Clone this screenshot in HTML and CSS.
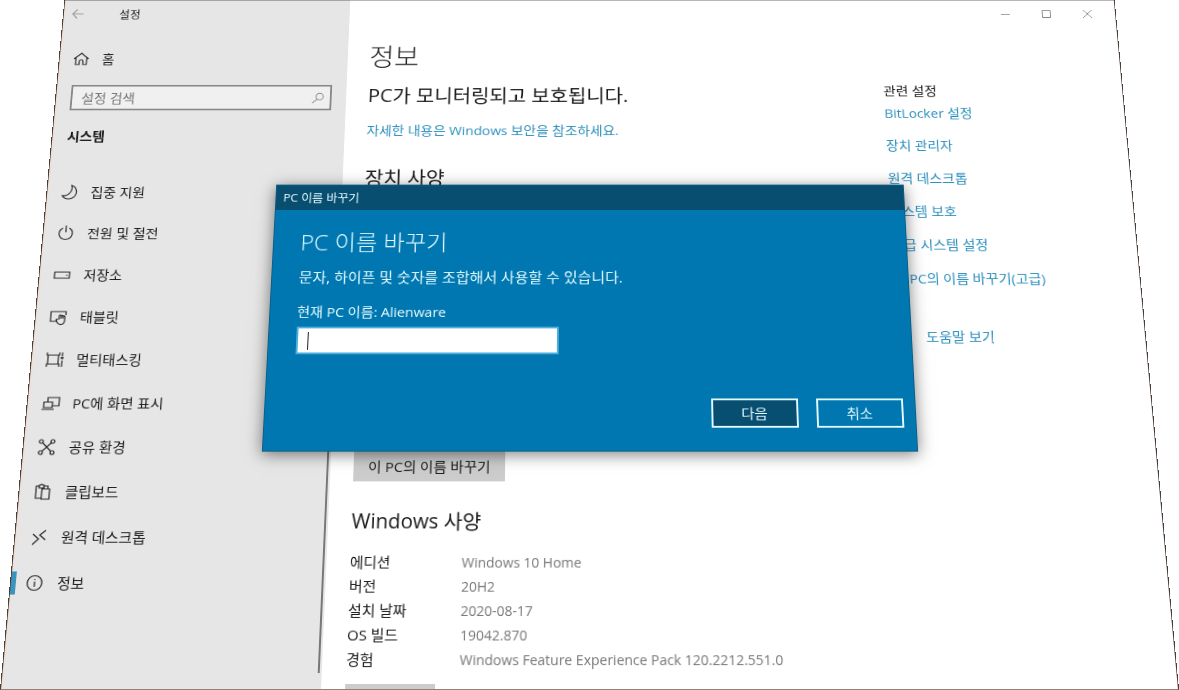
FILE: index.html
```
<!DOCTYPE html>
<html lang="ko">
<head>
<meta charset="utf-8">
<meta name="viewport" content="width=device-width, initial-scale=1.0">
<title>설정</title>
<link rel="stylesheet" href="styles.css">
</head>
<body>
<div class="window">

  <div class="sidebar">
    <div class="titlebar">
      <button class="back" aria-label="뒤로"><svg width="14" height="14" viewBox="0 0 14 14"><path d="M13 7H1M6 1.5L1 7l5 5.5"/></svg></button>
      <span>설정</span>
    </div>
    <a class="nav-item home" href="#">
      <svg viewBox="0 0 20 20"><path d="M2 10L10 3l8 7M4 8.500V17h4v-4q0-2 2-2t2 2v4h4V8.500"/></svg>홈
    </a>
    <div class="search">
      <input type="text" placeholder="설정 검색" aria-label="설정 검색">
      <svg viewBox="0 0 16 16"><circle cx="10" cy="6" r="4.5"/><path d="M7 9.5L1 15"/></svg>
    </div>
    <h2 class="group">시스템</h2>
    <nav>
      <a class="nav-item" href="#"><svg viewBox="0 0 20 20"><path d="M12 2c4 1.500 6 5 5.500 9-.5 4-4 7-8 7-3 0-5.500-1.500-7-4 3 .5 6-.5 8-3s2.500-6 1.500-9z"/></svg>집중 지원</a>
      <a class="nav-item" href="#"><svg viewBox="0 0 20 20"><path d="M10 1v8M6.500 4a7.200 7.200 0 1 0 7 0"/></svg>전원 및 절전</a>
      <a class="nav-item" href="#"><svg viewBox="0 0 20 20"><path d="M2 7h16v7H2zM14.500 10.500h1.500"/></svg>저장소</a>
      <a class="nav-item" href="#"><svg viewBox="0 0 20 20"><path d="M9 15H2V4h16v4M11 13V8.500q1-1.500 2 0V12V9q1-1 2 0v3V9.500q1-1 2 0V15q-.5 3.500-3.500 3.500-3 .3-4.500-2.500l-1-2.500q0-1.500 2-.5"/></svg>태블릿</a>
      <a class="nav-item" href="#"><svg viewBox="0 0 20 20"><path d="M3 5h11v10H3zM2 2v3h13V2M2 18v-3h13v3M18 2v4M18 11v7"/><circle cx="18" cy="8" r="1"/></svg>멀티태스킹</a>
      <a class="nav-item" href="#"><svg viewBox="0 0 20 20"><path d="M7 9V4h12v9h-7M3 9h9v6H3zM1 17h13"/></svg>PC에 화면 표시</a>
      <a class="nav-item" href="#"><svg viewBox="0 0 20 20"><circle cx="4" cy="4" r="2"/><circle cx="16" cy="4" r="2"/><circle cx="4" cy="16" r="2"/><circle cx="16" cy="16" r="2"/><path d="M5.500 5.500l9 9M14.500 5.500l-9 9"/></svg>공유 환경</a>
      <a class="nav-item" href="#"><svg viewBox="0 0 20 20"><path d="M9 17H3V4h3M11 4h4v3M6 3h1.500q1-2 2 0H11v3H6zM9 7h8v11H9z"/></svg>클립보드</a>
      <a class="nav-item" href="#"><svg viewBox="0 0 20 20"><path d="M4 7l6 5-6 6M17 3l-6 5 6 5"/></svg>원격 데스크톱</a>
      <a class="nav-item active" href="#"><svg viewBox="0 0 20 20"><circle cx="10" cy="10" r="7.500"/><path d="M10 8.500V14M10 6v1"/></svg>정보</a>
    </nav>
  </div>

  <div class="page">
    <div class="controls">
      <button aria-label="최소화"><svg width="10" height="10" viewBox="0 0 10 10"><path d="M0 5.500h10"/></svg></button>
      <button aria-label="최대화"><svg width="10" height="10" viewBox="0 0 10 10"><path d="M.5.5h9v9h-9z"/></svg></button>
      <button aria-label="닫기"><svg width="10" height="10" viewBox="0 0 10 10"><path d="M0 0l10 10M10 0L0 10"/></svg></button>
    </div>
    <div class="columns">
      <main>
        <h1>정보</h1>
        <h2>PC가 모니터링되고 보호됩니다.</h2>
        <a class="security" href="#">자세한 내용은 Windows 보안을 참조하세요.</a>
        <h2 class="device">장치 사양</h2>
        <button class="grey">이 PC의 이름 바꾸기</button>
        <h2 class="edition">Windows 사양</h2>
        <table>
          <tr><th>에디션</th><td>Windows 10 Home</td></tr>
          <tr><th>버전</th><td>20H2</td></tr>
          <tr><th>설치 날짜</th><td>2020-08-17</td></tr>
          <tr><th>OS 빌드</th><td>19042.870</td></tr>
          <tr><th>경험</th><td>Windows Feature Experience Pack 120.2212.551.0</td></tr>
        </table>
        <button class="grey copy" aria-label="복사"></button>
      </main>
      <aside>
        <h3>관련 설정</h3>
        <a href="#">BitLocker 설정</a>
        <a href="#">장치 관리자</a>
        <a href="#">원격 데스크톱</a>
        <a href="#">시스템 보호</a>
        <a href="#">고급 시스템 설정</a>
        <a href="#">이 PC의 이름 바꾸기(고급)</a>
        <a class="help" href="#">도움말 보기</a>
      </aside>
    </div>
  </div>

  <form class="dialog" role="dialog" aria-labelledby="dialog-title">
    <div class="dialog-bar">PC 이름 바꾸기</div>
    <div class="dialog-body">
      <h2 id="dialog-title">PC 이름 바꾸기</h2>
      <p>문자, 하이픈 및 숫자를 조합해서 사용할 수 있습니다.</p>
      <label for="pc-name">현재 PC 이름: Alienware</label>
      <div class="name-box">
        <span class="caret"></span>
        <input id="pc-name" type="text">
      </div>
    </div>
    <div class="dialog-buttons">
      <button class="next" type="button">다음</button>
      <button type="button">취소</button>
    </div>
  </form>

</div>
</body>
</html>
```
FILE: styles.css
```
* {
  box-sizing: border-box;
}

body {
  margin: 0;
  height: 100vh;
  display: flex;
  align-items: flex-end;
  overflow: hidden;
  background: #fff;
  color: #1a1a1a;
  font: 15px/24px "Open Sans", "Noto Sans CJK KR", sans-serif;
}

h1, h2, h3, p {
  margin: 0;
  font-weight: 400;
}

a {
  color: #2b8fbd;
  text-decoration: none;
}

button, input {
  font: inherit;
  color: inherit;
  border: 0;
  padding: 0;
  background: none;
}

svg {
  fill: none;
  stroke: #222;
  stroke-width: 1.2;
}

/* the whole window leans back from its bottom edge */
.window {
  position: relative;
  flex: 1;
  height: 112.4vh;
  flex-shrink: 0;
  display: flex;
  overflow: hidden;
  border: 1px solid #4a3d35;
  border-bottom-color: #96836f;
  transform: perspective(48vh) rotateX(3deg);
  transform-origin: 50% 100%;
}

/* sidebar */
.sidebar {
  position: relative;
  width: 320px;
  flex-shrink: 0;
  background: #e6e6e6;
  border-left: 2px solid #ece1da;
}

.sidebar::after {
  content: "";
  position: absolute;
  right: 2px;
  top: 300px;
  bottom: 16px;
  width: 2px;
  background: #777;
}

.titlebar {
  height: 34px;
  padding-left: 7px;
  display: flex;
  align-items: center;
  gap: 39px;
  font-size: 13px;
}

.back {
  width: 14px;
  height: 14px;
  display: flex;
}

.back svg {
  stroke: #999;
}

.nav-item {
  position: relative;
  display: flex;
  align-items: center;
  gap: 13px;
  height: 48px;
  padding-left: 12px;
  color: #1a1a1a;
}

.nav-item svg {
  width: 20px;
  height: 20px;
}

.home {
  margin-top: 15px;
}

.active::before {
  content: "";
  position: absolute;
  left: -2px;
  top: 12px;
  width: 5px;
  height: 24px;
  background: #3a95bd;
}

.search {
  display: flex;
  align-items: center;
  height: 31px;
  margin: 8px 16px 0 14px;
  padding: 0 6px 0 10px;
  background: #f0f0f0;
  border: 2px solid #888;
}

.search input {
  flex: 1;
  min-width: 0;
}

.search input::placeholder {
  color: #777;
}

.search svg {
  width: 14px;
  height: 14px;
  stroke: #888;
}

.group {
  margin: 19px 0 31px 14px;
  font-size: 15px;
  line-height: 24px;
  font-weight: 700;
}

/* page */
.page {
  flex: 1;
  min-width: 0;
  display: flex;
  flex-direction: column;
  background: #fff;
}

.controls {
  height: 34px;
  flex-shrink: 0;
  display: flex;
  justify-content: flex-end;
  padding-right: 8px;
}

.controls button {
  width: 46px;
  display: flex;
  align-items: center;
  justify-content: center;
}

.controls svg {
  stroke: #888;
  stroke-width: 1;
}

.columns {
  display: flex;
}

main {
  flex: 1;
  min-width: 0;
  padding: 16px 0 0 24px;
}

h1 {
  font-size: 30px;
  line-height: 40px;
  font-weight: 300;
  margin-bottom: 13px;
}

h2 {
  font-size: 22px;
  line-height: 28px;
}

.security {
  display: block;
  margin: 17px 0 30px;
}

.grey {
  display: block;
  height: 32px;
  padding: 0 15px;
  background: #ccc;
}

.device {
  margin-bottom: 297px;
}

.edition {
  margin: 28px 0 17px;
  font-size: 21px;
}

table {
  border-spacing: 0;
  line-height: 25px;
}

th, td {
  padding: 0;
  text-align: left;
  font-weight: 400;
}

th {
  width: 114px;
}

td {
  color: #777;
  font-size: 14px;
}

.copy {
  width: 90px;
  margin-top: 12px;
}

aside {
  width: 264px;
  padding-top: 66px;
  display: flex;
  flex-direction: column;
  align-items: flex-start;
  gap: 15px;
}

aside h3 {
  font-size: 15px;
  margin-bottom: -12px;
}

.help {
  margin: 27px 0 0 32px;
}

/* rename dialog */
.dialog {
  position: absolute;
  top: 225px;
  left: 0;
  right: 0;
  width: 682px;
  margin: 0 auto;
  background: #0077b0;
  border: 1px solid #0a5f8a;
  color: #e4fbff;
  box-shadow: 0 3px 16px rgba(0, 0, 0, .5);
}

.dialog-bar {
  height: 29px;
  padding-left: 8px;
  background: #084e70;
  font-size: 13px;
  line-height: 28px;
}

.dialog-body {
  padding: 21px 29px 0;
}

.dialog h2 {
  font-size: 25px;
  line-height: 32px;
  font-weight: 300;
}

.dialog p {
  margin: 13px 0 15px;
  font-size: 16px;
}

.dialog label {
  display: block;
}

.name-box {
  display: flex;
  align-items: center;
  width: 278px;
  height: 31px;
  margin-top: 5px;
  padding-left: 10px;
  background: #fff;
  border: 2px solid #4fb0dd;
  color: #111;
}

.name-box input {
  flex: 1;
  min-width: 0;
  outline: 0;
}

.caret {
  width: 1px;
  height: 20px;
  background: #111;
}

.dialog-buttons {
  display: flex;
  justify-content: flex-end;
  gap: 19px;
  padding: 49px 12px 25px;
}

.dialog-buttons button {
  width: 91px;
  height: 32px;
  border: 2px solid #e4fbff;
}

.dialog-buttons .next {
  background: #084e70;
}
```
